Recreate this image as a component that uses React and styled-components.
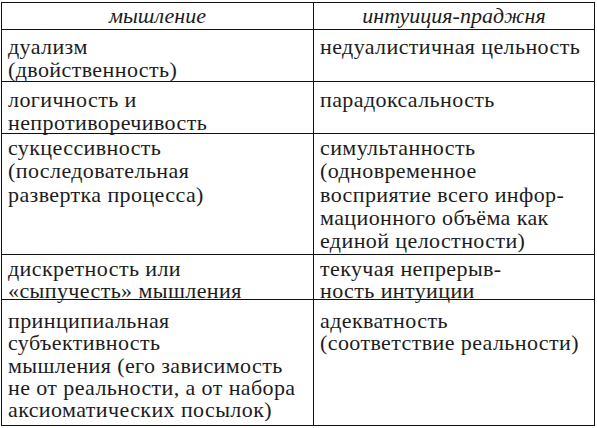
import React from "react";
import styled, { createGlobalStyle } from "styled-components";

const Global = createGlobalStyle`
  html, body { margin: 0; padding: 0; background: #fff; }
`;

const Page = styled.div`
  padding: 2px 0 0 1px;
  font-family: serif;
  color: #1c1c1c;
`;

const Table = styled.div`
  display: grid;
  grid-template-columns: 312px 281px;
  width: 594px;
  border-top: 1px solid #111;
  border-left: 1px solid #111;
  box-sizing: border-box;
`;

const HeadCell = styled.div`
  box-sizing: border-box;
  height: 27px;
  border-right: 1px solid #111;
  border-bottom: 1px solid #111;
  padding-top: 2px;
  text-align: center;
  font-family: serif;
  font-style: italic;
  font-size: 22px;
  line-height: 22px;
`;

const Cell = styled.div`
  box-sizing: border-box;
  height: ${(p) => p.$h}px;
  border-right: 1px solid #111;
  border-bottom: 1px solid #111;
  padding: ${(p) => p.$pt}px 4px 0 6px;
  font-family: serif;
  font-size: 22px;
  letter-spacing: 0.4px;
  line-height: ${(p) => p.$lh}px;
`;

const Line = styled.div``;

const rows = [
  { h: 52, pt: 5, lh: 23, l: ["дуализм", "(двойственность)"], r: ["недуалистичная цельность"] },
  { h: 52, pt: 6, lh: 23, l: ["логичность и", "непротиворечивость"], r: ["парадоксальность"] },
  {
    h: 121,
    pt: 2,
    lh: 23.3,
    l: ["сукцессивность", "(последовательная", "развертка процесса)"],
    r: [
      "симультанность",
      "(одновременное",
      "восприятие всего инфор-",
      "мационного объёма как",
      "единой целостности)",
    ],
  },
  { h: 45, pt: 3, lh: 22, l: ["дискретность или", "«сыпучесть» мышления"], r: ["текучая непрерыв-", "ность интуиции"] },
  {
    h: 126,
    pt: 10,
    lh: 22.3,
    l: [
      "принципиальная",
      "субъективность",
      "мышления (его зависимость",
      "не от реальности, а от набора",
      "аксиоматических посылок)",
    ],
    r: ["адекватность", "(соответствие реальности)"],
  },
];

export default function App() {
  return (
    <Page lang="ru">
      <Global />
      <Table>
        <HeadCell>мышление</HeadCell>
        <HeadCell>интуиция-праджня</HeadCell>
        {rows.map((row, i) => (
          <React.Fragment key={i}>
            <Cell $h={row.h} $pt={row.pt} $lh={row.lh}>
              {row.l.map((t, j) => (
                <Line key={j}>{t}</Line>
              ))}
            </Cell>
            <Cell $h={row.h} $pt={row.pt} $lh={row.lh}>
              {row.r.map((t, j) => (
                <Line key={j}>{t}</Line>
              ))}
            </Cell>
          </React.Fragment>
        ))}
      </Table>
    </Page>
  );
}
